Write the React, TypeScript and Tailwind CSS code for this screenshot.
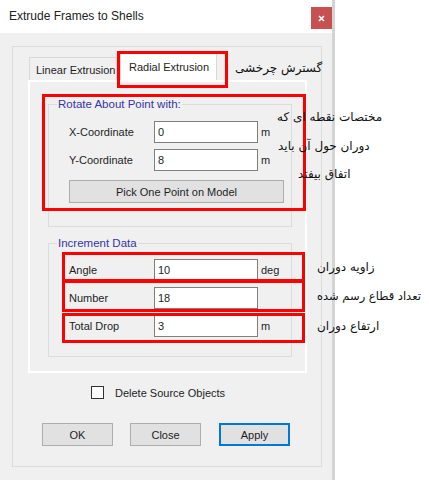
import React from "react";

function Row({ label, value, unit }: { label: string; value: string; unit?: string }) {
  return (
    <div className="flex items-center h-[22px]">
      <div className="w-[85px]">{label}</div>
      <div className="w-[104px] h-[22px] bg-white border border-[#7f7f7f] flex items-center pl-[3px]">{value}</div>
      {unit ? <div className="ml-[3px]">{unit}</div> : null}
    </div>
  );
}

function Btn({ children, primary }: { children: React.ReactNode; primary?: boolean }) {
  return (
    <div
      className={
        "w-[71px] h-[23px] flex items-center justify-center bg-[#e1e1e1] " +
        (primary ? "border-2 border-[#0078d7]" : "border border-[#adadad]")
      }
    >
      {children}
    </div>
  );
}

export default function App() {
  const fa = "font-['DejaVu_Sans',sans-serif]";
  return (
    <div className="relative w-[429px] h-[480px] bg-white overflow-hidden font-['Liberation_Sans',Arial,sans-serif] text-[11px] text-[#1e1e1e] leading-[14px]">
      <div className="w-[335px] h-[480px] flex flex-col bg-[#f0f0f0] border-r-[3px] border-[#d4d4d4]">
        {/* title bar */}
        <div className="h-[33px] bg-white flex items-start shrink-0">
          <div className="pl-[9px] pt-[9px] text-[12px] text-[#222]">Extrude Frames to Shells</div>
          <div className="ml-auto mt-[7px] w-[21px] h-[22px] bg-[#c75050] flex items-center justify-center">
            <svg width="7" height="7" viewBox="0 0 7 7">
              <path d="M1 1 L6 6 M6 1 L1 6" stroke="white" strokeWidth="1.6" />
            </svg>
          </div>
        </div>
        {/* body */}
        <div className="px-[12px] pt-[13px]">
          <div className="w-[310px] h-[421px] border border-[#dcdcdc] pl-[15px] pt-[6px]">
            {/* tabs */}
            <div className="flex items-end h-[27px]">
              <div className="ml-[1px] w-[88px] h-[23px] border border-b-0 border-[#d9d9d9] bg-[#f0f0f0] pl-[6px] pt-[5px]">
                Linear Extrusion
              </div>
              <div className="ml-[3px] w-[97px] h-[27px] border border-b-0 border-[#d9d9d9] bg-white pl-[8px] pt-[6px]">
                Radial Extrusion
              </div>
            </div>
            {/* panel */}
            <div className="w-[279px] h-[293px] border-2 border-white">
              <fieldset className="ml-[18px] mt-[15px] w-[244px] border border-[#dcdcdc] pb-[23px]">
                <legend className="ml-[8px] px-[1px] text-[#3535a8] text-[11.5px] leading-[14px]">Rotate About Point with:</legend>
                <div className="pl-[20px]">
                  <div className="mt-[10px] flex flex-col gap-[6px]">
                    <Row label="X-Coordinate" value="0" unit="m" />
                    <Row label="Y-Coordinate" value="8" unit="m" />
                  </div>
                  <div className="mt-[9px] w-[215px] h-[23px] bg-[#e1e1e1] border border-[#adadad] flex items-center justify-center">
                    Pick One Point on Model
                  </div>
                </div>
              </fieldset>
              <fieldset className="ml-[18px] mt-[9px] w-[244px] border border-[#dcdcdc] pb-[19px]">
                <legend className="ml-[8px] px-[1px] text-[#3535a8] text-[11.5px] leading-[14px]">Increment Data</legend>
                <div className="pl-[20px] mt-[9px] flex flex-col gap-[6px]">
                  <Row label="Angle" value="10" unit="deg" />
                  <Row label="Number" value="18" />
                  <Row label="Total Drop" value="3" unit="m" />
                </div>
              </fieldset>
            </div>
            {/* checkbox */}
            <div className="mt-[13px] ml-[63px] flex items-center h-[13px]">
              <div className="w-[13px] h-[13px] bg-white border-[1.5px] border-[#333]" />
              <div className="ml-[11px]">Delete Source Objects</div>
            </div>
            {/* buttons */}
            <div className="mt-[24px] ml-[14px] flex gap-[17px]">
              <Btn>OK</Btn>
              <Btn>Close</Btn>
              <div className="ml-[1px]">
                <Btn primary>Apply</Btn>
              </div>
            </div>
          </div>
        </div>
      </div>

      {/* red annotation boxes */}
      <div className="absolute left-[117px] top-[51px] w-[111px] h-[37px] border-[3px] border-[#ff0000]" />
      <div className="absolute left-[42px] top-[94px] w-[264px] h-[117px] border-[3px] border-[#ff0000]" />
      <div className="absolute left-[62px] top-[252px] w-[243px] h-[30px] border-[3px] border-[#ff0000]" />
      <div className="absolute left-[62px] top-[280px] w-[243px] h-[32px] border-[3px] border-[#ff0000]" />
      <div className="absolute left-[62px] top-[313px] w-[243px] h-[30px] border-[3px] border-[#ff0000]" />

      {/* Persian annotations */}
      <div dir="rtl" className={"absolute left-[235px] top-[59px] text-[12px] leading-[18px] text-[#111] " + fa}>گسترش چرخشی</div>
      <div dir="rtl" className={"absolute left-[277px] top-[108px] text-[12px] leading-[18px] text-[#111] " + fa}>مختصات نقطه ای که</div>
      <div dir="rtl" className={"absolute left-[278px] top-[137px] text-[12px] leading-[18px] text-[#111] " + fa}>دوران حول آن باید</div>
      <div dir="rtl" className={"absolute left-[298px] top-[165px] text-[12px] leading-[18px] text-[#111] " + fa}>اتفاق بیفتد</div>
      <div dir="rtl" className={"absolute left-[317px] top-[258px] text-[12px] leading-[18px] text-[#111] " + fa}>زاویه دوران</div>
      <div dir="rtl" className={"absolute left-[317px] top-[287px] text-[11.5px] leading-[18px] text-[#111] " + fa}>تعداد قطاع رسم شده</div>
      <div dir="rtl" className={"absolute left-[317px] top-[317px] text-[12px] leading-[18px] text-[#111] " + fa}>ارتفاع دوران</div>
    </div>
  );
}
